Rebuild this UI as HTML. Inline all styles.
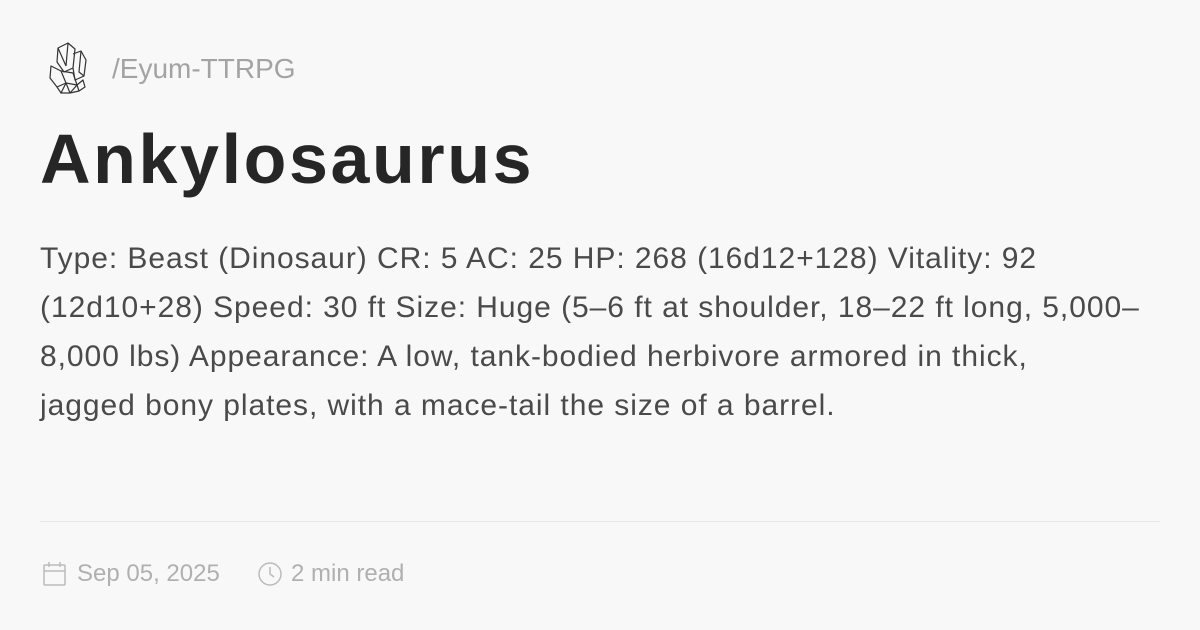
<!DOCTYPE html>
<html><head><meta charset="utf-8"><style>
html,body{margin:0;padding:0}
body{width:1200px;height:630px;background:#f9f8f9;font-family:"Liberation Sans",sans-serif;position:relative;overflow:hidden}
.logo{position:absolute;left:48px;top:42px}
.site{position:absolute;left:112px;top:53px;font-size:28px;color:#a3a3a3}
h1{position:absolute;left:40px;top:119px;margin:0;font-size:70px;font-weight:bold;color:#262626;letter-spacing:2.6px}
.desc{position:absolute;left:40px;top:234px;font-size:30px;line-height:49px;color:#4a4a4a;white-space:nowrap;letter-spacing:0.95px}
.hr{position:absolute;left:40px;right:40px;top:521px;height:1px;background:#e6e6e6}
.meta{position:absolute;top:560px;font-size:24px;color:#b0b0b0}
</style></head><body>
<svg class="logo" width="40" height="52" viewBox="0 0 40 52" fill="none" stroke="#333" stroke-width="1.2" stroke-linejoin="round">
<path d="M10 6 L20 1 L27 7 L25 26 L16 30 L9 20 Z"/>
<path d="M20 1 L18 24 M10 6 L18 24"/>
<path d="M25 12 L33 9 L38 18 L36 34 L27 38 L25 26"/>
<path d="M33 9 L31 30 L36 34"/>
<path d="M3 24 L13 29 L18 41 L9 45 L2 36 Z"/>
<path d="M13 29 L25 31 L29 43 L18 41"/>
<path d="M9 45 L13 51 L22 51 L31 49 L37 45 L35 38 L29 43 M13 51 L18 41 L22 51 L29 43 L31 49"/>
</svg>
<div class="site">/Eyum-TTRPG</div>
<h1>Ankylosaurus</h1>
<div class="desc">Type: Beast (Dinosaur) CR: 5 AC: 25 HP: 268 (16d12+128) Vitality: 92<br>(12d10+28) Speed: 30 ft Size: Huge (5–6 ft at shoulder, 18–22 ft long, 5,000–<br>8,000 lbs) Appearance: A low, tank-bodied herbivore armored in thick,<br>jagged bony plates, with a mace-tail the size of a barrel.</div>
<div class="hr"></div>
<svg style="position:absolute;left:43px;top:561px" width="24" height="26" viewBox="0 0 24 26" fill="none" stroke="#bbb" stroke-width="1.5"><rect x="1" y="4" width="21" height="20" rx="1"/><path d="M1 10 H22 M6 1 V6 M17 1 V6"/></svg>
<div class="meta" style="left:77px">Sep 05, 2025</div>
<svg style="position:absolute;left:257px;top:561px" width="26" height="26" viewBox="0 0 26 26" fill="none" stroke="#bbb" stroke-width="1.5"><circle cx="13" cy="13" r="11"/><path d="M13 6 V13 L17 16"/></svg>
<div class="meta" style="left:291px">2 min read</div>
</body></html>
